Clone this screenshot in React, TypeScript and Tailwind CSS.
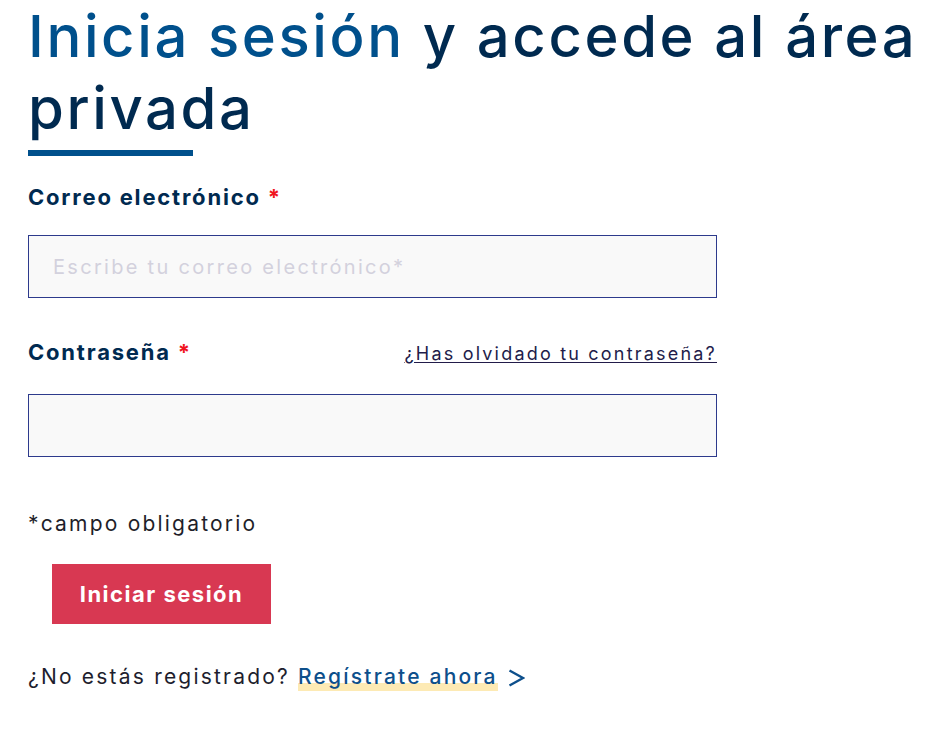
const font = { fontFamily: '"Inter", "Noto Sans", sans-serif' };

export default function App() {
  return (
    <div className="min-h-screen bg-white px-7" style={font}>
      <h1 className="text-[58px] leading-[72px] font-medium text-[#002a50] tracking-[2.6px]">
        <span className="text-[#00508c]">Inicia sesión</span> y accede al área
        <br />
        privada
      </h1>
      <div className="mt-[6px] h-[6px] w-[165px] bg-[#00508c]" />

      <form className="w-[689px]">
        {/* Correo */}
        <label className="mt-[27px] block text-[22px] leading-7 font-bold tracking-[1.8px] text-[#002a50]">
          Correo electrónico <span className="text-[#f0141e]">*</span>
        </label>
        <input
          type="email"
          placeholder="Escribe tu correo electrónico*"
          className="mt-[24px] block h-[63px] w-full border border-[#2d3a8c] bg-[#f9f9f9] px-6 text-[20px] tracking-[2.3px] placeholder:text-[#d3d1dd] outline-none"
        />

        {/* Contraseña */}
        <div className="mt-[40px] flex items-baseline justify-between leading-7">
          <label className="text-[22px] font-bold tracking-[1.8px] text-[#002a50]">
            Contraseña <span className="text-[#f0141e]">*</span>
          </label>
          <a href="#" className="text-[18px] tracking-[2.2px] text-[#221c4a] underline underline-offset-2">
            ¿Has olvidado tu contraseña?
          </a>
        </div>
        <input
          type="password"
          className="mt-[26px] block h-[63px] w-full border border-[#2d3a8c] bg-[#f9f9f9] px-6 text-[20px] outline-none"
        />

        <p className="mt-[53px] text-[21px] leading-7 tracking-[2.2px] text-[#1f1f2a]">*campo obligatorio</p>

        <button
          type="button"
          className="ml-6 mt-[26px] h-[60px] w-[219px] bg-[#d83852] text-[22px] font-bold tracking-[1.5px] text-white"
        >
          Iniciar sesión
        </button>

        <p className="mt-[39px] flex items-center text-[21px] leading-7 tracking-[2.2px] text-[#1e1e2e]">
          <span>¿No estás registrado?&nbsp;</span>
          <a href="#" className="font-medium text-[#0d4f8b] bg-[linear-gradient(transparent_70%,#fdeab4_70%)]">
            Regístrate ahora
          </a>
          <svg width="17" height="18" viewBox="0 0 17 18" className="ml-[10px] mt-[2px]" aria-hidden>
            <polyline points="1.5,1.5 15,9 1.5,16.5" fill="none" stroke="#0d4f8b" strokeWidth="2.4" strokeLinejoin="miter" />
          </svg>
        </p>
      </form>
    </div>
  );
}
